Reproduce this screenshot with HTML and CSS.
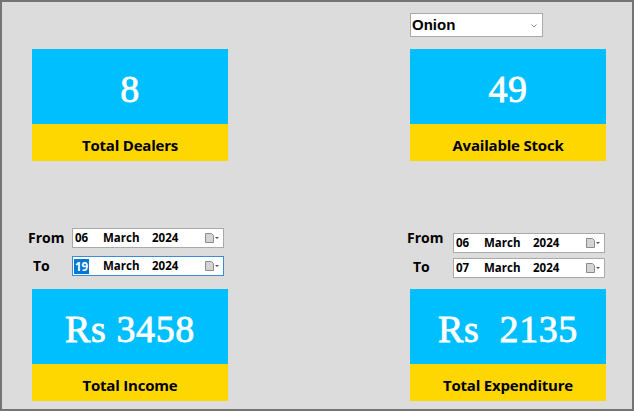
FILE: index.html
```html
<!DOCTYPE html>
<html>
<head>
<meta charset="utf-8">
<link rel="stylesheet" href="styles.css">
</head>
<body>
<div class="window">
  <div class="col col-left">
    <div class="card">
      <div class="card-value">8</div>
      <div class="card-label">Total Dealers</div>
    </div>
    <div class="dates dates-left">
      <div class="date-row">
        <span class="date-label">From</span>
        <div class="date-box">
          <span class="d-day">06</span><span class="d-month">March</span><span class="d-year">2024</span>
          <svg class="cal" width="14" height="10" viewBox="0 0 14 10"><path d="M0.5 0.5H6.5L8.5 2.5V9.5H0.5Z" fill="#d4d4d4" stroke="#8c8c8c"/><path d="M10 4H14L12 6Z" fill="#555"/></svg>
        </div>
      </div>
      <div class="date-row">
        <span class="date-label label-to">To</span>
        <div class="date-box focused">
          <span class="d-day"><span class="sel">19</span></span><span class="d-month">March</span><span class="d-year">2024</span>
          <svg class="cal" width="14" height="10" viewBox="0 0 14 10"><path d="M0.5 0.5H6.5L8.5 2.5V9.5H0.5Z" fill="#d4d4d4" stroke="#8c8c8c"/><path d="M10 4H14L12 6Z" fill="#555"/></svg>
        </div>
      </div>
    </div>
    <div class="card card-bottom">
      <div class="card-value">Rs 3458</div>
      <div class="card-label">Total Income</div>
    </div>
  </div>
  <div class="col col-right">
    <div class="select">
      <span>Onion</span>
      <svg class="chev" width="6" height="4" viewBox="0 0 6 4"><path d="M0.5 0.5L3 3L5.5 0.5" fill="none" stroke="#8a8a8a" stroke-width="1"/></svg>
    </div>
    <div class="card card-right">
      <div class="card-value">49</div>
      <div class="card-label">Available Stock</div>
    </div>
    <div class="dates dates-right">
      <div class="date-row">
        <span class="date-label label-from-r">From</span>
        <div class="date-box">
          <span class="d-day">06</span><span class="d-month">March</span><span class="d-year">2024</span>
          <svg class="cal" width="14" height="10" viewBox="0 0 14 10"><path d="M0.5 0.5H6.5L8.5 2.5V9.5H0.5Z" fill="#d4d4d4" stroke="#8c8c8c"/><path d="M10 4H14L12 6Z" fill="#555"/></svg>
        </div>
      </div>
      <div class="date-row">
        <span class="date-label label-to">To</span>
        <div class="date-box">
          <span class="d-day">07</span><span class="d-month">March</span><span class="d-year">2024</span>
          <svg class="cal" width="14" height="10" viewBox="0 0 14 10"><path d="M0.5 0.5H6.5L8.5 2.5V9.5H0.5Z" fill="#d4d4d4" stroke="#8c8c8c"/><path d="M10 4H14L12 6Z" fill="#555"/></svg>
        </div>
      </div>
    </div>
    <div class="card card-right card-bottom-r">
      <div class="card-value">Rs&nbsp; 2135</div>
      <div class="card-label">Total Expenditure</div>
    </div>
  </div>
</div>
</body>
</html>
```

FILE: styles.css
```css
html, body {
  margin: 0;
  padding: 0;
  background: #dcdcdc;
}

.window {
  box-sizing: border-box;
  width: 634px;
  height: 411px;
  border: 2px solid #747474;
  background: #dcdcdc;
  display: grid;
  grid-template-columns: 379px 1fr;
  padding-left: 26px;
}

.col {
  display: flex;
  flex-direction: column;
  align-items: flex-start;
}

.col-left {
  padding-top: 47px;
}

.col-right {
  padding-top: 11px;
}

/* cards */
.card {
  width: 196px;
  height: 112px;
  display: flex;
  flex-direction: column;
  margin-left: 4px;
}

.card-right {
  margin-left: 3px;
  margin-top: 12px;
}

.card-bottom {
  margin-top: 13px;
}

.card-bottom-r {
  margin-top: 11px;
}

.card-value {
  height: 75px;
  box-sizing: border-box;
  padding-top: 5px;
  background: #00bfff;
  color: #ffffff;
  font-family: "Liberation Serif", "Times New Roman", serif;
  font-weight: 400;
  font-size: 38px;
  letter-spacing: 0.6px;
  -webkit-text-stroke: 0.8px #ffffff;
  display: flex;
  align-items: center;
  justify-content: center;
  white-space: pre;
}

.card-label {
  height: 37px;
  box-sizing: border-box;
  padding-top: 5px;
  background: #ffd700;
  color: #000000;
  font-family: "Open Sans", "Noto Sans", sans-serif;
  font-weight: 700;
  font-size: 15px;
  letter-spacing: -0.2px;
  display: flex;
  align-items: center;
  justify-content: center;
}

/* select */
.select {
  box-sizing: border-box;
  margin-left: 3px;
  width: 133px;
  height: 24px;
  background: #ffffff;
  border: 1px solid #a9a9a9;
  display: flex;
  align-items: center;
  justify-content: space-between;
  padding: 0 5px 0 1px;
  font-family: "Liberation Sans", Arial, sans-serif;
  font-weight: 700;
  font-size: 15px;
  line-height: 22px;
  color: #000000;
}

.chev {
  display: block;
  margin-top: 1px;
}

/* dates */
.dates {
  display: flex;
  flex-direction: column;
}

.dates-left {
  margin-top: 67px;
  gap: 8px;
}

.dates-right {
  margin-top: 72px;
  gap: 5px;
}

.date-row {
  display: flex;
  align-items: flex-start;
}

.date-label {
  width: 44px;
  font-family: "Open Sans", "Noto Sans", sans-serif;
  font-weight: 700;
  font-size: 14px;
  line-height: 20px;
  color: #000000;
}

.dates-right .date-label {
  width: 46px;
}

.label-to {
  padding-left: 5px;
  box-sizing: border-box;
}

.dates-right .label-to {
  padding-left: 6px;
  margin-top: -1px;
}

.label-from-r {
  margin-top: -5px;
}

.date-box {
  box-sizing: border-box;
  width: 152px;
  height: 20px;
  background: #ffffff;
  border: 1px solid #a9a9a9;
  display: flex;
  align-items: center;
  padding-left: 2px;
  font-family: "Open Sans", "Noto Sans", sans-serif;
  font-weight: 700;
  font-size: 11.5px;
  line-height: 18px;
  color: #000000;
}

.date-box.focused {
  border-color: #3d8ad8;
}

.d-day {
  width: 28px;
  display: flex;
  align-items: center;
}

.d-month {
  width: 49px;
}

.d-year {
  width: 53px;
}

.sel {
  background: #0078d7;
  color: #ffffff;
  line-height: 15px;
  padding: 0 1px;
  margin-left: -1px;
}

.cal {
  display: block;
}
```
